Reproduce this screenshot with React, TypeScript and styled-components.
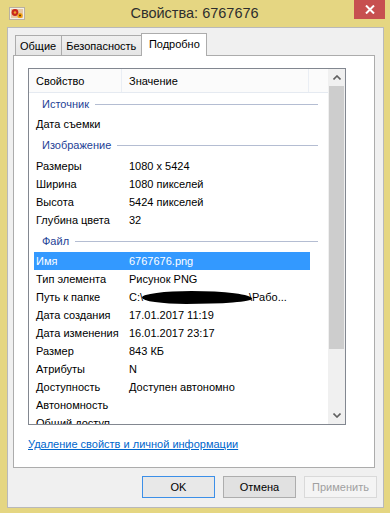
import React from 'react';
import styled, { createGlobalStyle } from 'styled-components';

type Row =
  | { kind: 'group'; title: string; height: number }
  | { kind: 'item'; label: string; value?: React.ReactNode; selected?: boolean };

const rows: Row[] = [
  { kind: 'group', title: 'Источник', height: 22 },
  { kind: 'item', label: 'Дата съемки' },
  { kind: 'group', title: 'Изображение', height: 24 },
  { kind: 'item', label: 'Размеры', value: '1080 x 5424' },
  { kind: 'item', label: 'Ширина', value: '1080 пикселей' },
  { kind: 'item', label: 'Высота', value: '5424 пикселей' },
  { kind: 'item', label: 'Глубина цвета', value: '32' },
  { kind: 'group', title: 'Файл', height: 23 },
  { kind: 'item', label: 'Имя', value: '6767676.png', selected: true },
  { kind: 'item', label: 'Тип элемента', value: 'Рисунок PNG' },
  { kind: 'item', label: 'Путь к папке', value: 'path' },
  { kind: 'item', label: 'Дата создания', value: '17.01.2017 11:19' },
  { kind: 'item', label: 'Дата изменения', value: '16.01.2017 23:17' },
  { kind: 'item', label: 'Размер', value: '843 КБ' },
  { kind: 'item', label: 'Атрибуты', value: 'N' },
  { kind: 'item', label: 'Доступность', value: 'Доступен автономно' },
  { kind: 'item', label: 'Автономность' },
  { kind: 'item', label: 'Общий доступ' },
];

const tabs = ['Общие', 'Безопасность', 'Подробно'];

const AppIcon = () => (
  <svg width="16" height="13" viewBox="0 0 16 13">
    <rect x="0.5" y="0.5" width="15" height="12" fill="#f4f0e6" stroke="#b8b0a0" />
    <rect x="2" y="2" width="12" height="9" fill="#e8c8a0" />
    <circle cx="6" cy="5.5" r="3.4" fill="#c8281c" />
    <circle cx="6" cy="5.5" r="1.3" fill="#f0a030" />
    <circle cx="11" cy="8.5" r="2.6" fill="#f2a010" />
    <circle cx="11" cy="8.5" r="1" fill="#603010" />
  </svg>
);

const Chevron = ({ down }: { down?: boolean }) => (
  <svg width="8" height="5" viewBox="0 0 8 5" style={{ transform: down ? 'rotate(180deg)' : undefined }}>
    <path d="M0.5 4.5 L4 1 L7.5 4.5" fill="none" stroke="#606060" strokeWidth="1.6" />
  </svg>
);

const App = () => {
  return (
    <>
      <GlobalStyle />
      <S.Window>
        <S.TitleBar>
          <S.IconBox>
            <AppIcon />
          </S.IconBox>
          <S.Title>Свойства: 6767676</S.Title>
          <S.CloseButton>
            <svg width="10" height="9" viewBox="0 0 10 9">
              <path d="M1 0.5 L9 8.5 M9 0.5 L1 8.5" stroke="#fff" strokeWidth="2" />
            </svg>
          </S.CloseButton>
        </S.TitleBar>
        <S.Client>
          <S.TabsRow>
            {tabs.map((tab, i) => (
              <S.Tab key={tab} $active={i === 2}>
                {tab}
              </S.Tab>
            ))}
          </S.TabsRow>
          <S.Panel>
            <S.ListBox>
              <S.ListContent>
                <S.HeaderRow>
                  <S.HeaderCell $width={93}>Свойство</S.HeaderCell>
                  <S.HeaderCell $width={187}>Значение</S.HeaderCell>
                  <S.HeaderCell $width={18} />
                </S.HeaderRow>
                {rows.map((row, i) =>
                  row.kind === 'group' ? (
                    <S.GroupRow key={i} $height={row.height}>
                      <S.GroupTitle>{row.title}</S.GroupTitle>
                      <S.GroupLine />
                    </S.GroupRow>
                  ) : (
                    <S.ItemRow key={i} $selected={row.selected}>
                      <S.Label>{row.label}</S.Label>
                      <S.Value>
                        {row.value === 'path' ? (
                          <>
                            C:\
                            <S.Redaction />
                            \Рабо...
                          </>
                        ) : (
                          row.value
                        )}
                      </S.Value>
                    </S.ItemRow>
                  ),
                )}
              </S.ListContent>
              <S.ScrollBar>
                <S.ScrollArrow>
                  <Chevron />
                </S.ScrollArrow>
                <S.ScrollThumb />
                <S.ScrollTrack />
                <S.ScrollArrow>
                  <Chevron down />
                </S.ScrollArrow>
              </S.ScrollBar>
            </S.ListBox>
            <S.Link>Удаление свойств и личной информации</S.Link>
          </S.Panel>
          <S.ButtonRow>
            <S.DialogButton $variant="default">OK</S.DialogButton>
            <S.DialogButton>Отмена</S.DialogButton>
            <S.DialogButton $variant="disabled">Применить</S.DialogButton>
          </S.ButtonRow>
        </S.Client>
      </S.Window>
    </>
  );
};

export default App;

const GlobalStyle = createGlobalStyle`
  * {
    box-sizing: border-box;
  }

  body {
    margin: 0;
    font-family: "Liberation Sans", Arial, sans-serif;
    font-size: 11px;
    color: #000;
  }
`;

const S = {
  Window: styled.div`
    display: flex;
    flex-direction: column;

    width: 390px;
    height: 513px;
    padding: 0 6px 5px 7px;

    background: #e5d682;
  `,

  TitleBar: styled.div`
    display: flex;
    align-items: flex-start;

    height: 27px;
  `,

  IconBox: styled.div`
    display: flex;

    width: 16px;
    margin: 7px 0 0 2px;
  `,

  Title: styled.div`
    flex: 1;

    padding: 5px 0 0 10px;

    font-size: 14.5px;
    color: #2e2e2e;
    text-align: center;
  `,

  CloseButton: styled.div`
    display: flex;
    justify-content: center;
    align-items: center;

    width: 31px;
    height: 19px;
    margin-right: -1px;

    background: #c75050;
  `,

  Client: styled.div`
    display: flex;
    flex-direction: column;

    height: 481px;

    border: 1px solid #b9b9b9;
    background: #f0f0f0;
  `,

  TabsRow: styled.div`
    position: relative;
    z-index: 1;

    display: flex;
    align-items: flex-end;

    height: 28px;
    padding-left: 7px;
    margin-bottom: -1px;
  `,

  Tab: styled.div<{ $active?: boolean }>`
    display: flex;
    align-items: center;
    justify-content: center;

    height: ${(p) => (p.$active ? '23px' : '21px')};
    padding: ${(p) => (p.$active ? '0 0 2px 0' : '0')};
    width: ${(p) => (p.$active ? '66px' : 'auto')};
    padding-left: ${(p) => (p.$active ? '0' : '4px')};
    padding-right: ${(p) => (p.$active ? '0' : '5px')};
    margin-left: -1px;

    border: 1px solid #acacac;
    border-bottom: ${(p) => (p.$active ? 'none' : '1px solid #acacac')};
    background: ${(p) => (p.$active ? '#ffffff' : 'linear-gradient(#f0f0f0, #e5e5e5)')};

    white-space: nowrap;

    &:first-child {
      margin-left: 0;
    }
  `,

  Panel: styled.div`
    display: flex;
    flex-direction: column;

    height: 413px;
    margin: 0 8px 0 5px;
    padding: 12px 0 0 14px;

    border: 1px solid #acacac;
    background: #ffffff;
  `,

  ListBox: styled.div`
    display: flex;

    width: 318px;
    height: 357px;

    border: 1px solid #828790;
    background: #ffffff;
    overflow: hidden;
  `,

  ListContent: styled.div`
    flex: 1;

    overflow: hidden;
  `,

  HeaderRow: styled.div`
    display: flex;

    height: 24px;

    border-bottom: 1px solid #e5eaf1;
    background: #fbfbfb;
  `,

  HeaderCell: styled.div<{ $width: number }>`
    display: flex;
    align-items: center;

    width: ${(p) => p.$width}px;
    padding-left: 7px;

    border-right: 1px solid #eaeef4;

    &:last-child {
      border-right: none;
    }
  `,

  GroupRow: styled.div<{ $height: number }>`
    display: flex;
    align-items: center;
    gap: 6px;

    height: ${(p) => p.$height}px;
    padding: 0 10px 0 13px;
  `,

  GroupTitle: styled.span`
    color: #1e3f96;
  `,

  GroupLine: styled.div`
    flex: 1;

    height: 1px;
    margin-top: 1px;

    background: #b4bdd2;
  `,

  ItemRow: styled.div<{ $selected?: boolean }>`
    display: flex;
    align-items: center;

    width: 276px;
    height: 18px;
    margin-left: 5px;
    padding-left: 2px;

    background: ${(p) => (p.$selected ? '#3399ff' : 'transparent')};
    color: ${(p) => (p.$selected ? '#ffffff' : '#000000')};
    white-space: nowrap;
  `,

  Label: styled.span`
    width: 93px;
  `,

  Value: styled.span`
    display: flex;
    align-items: center;
  `,

  Redaction: styled.span`
    display: inline-block;

    width: 110px;
    height: 13px;
    margin: 1px -3px 0 -1px;

    border-radius: 45% 55% 60% 40% / 50% 60% 40% 50%;
    background: #000000;
  `,

  ScrollBar: styled.div`
    display: flex;
    flex-direction: column;

    width: 17px;

    background: #f0f0f0;
  `,

  ScrollArrow: styled.div`
    display: flex;
    justify-content: center;
    align-items: center;

    height: 17px;
  `,

  ScrollThumb: styled.div`
    height: 263px;
    margin: 0 1px;

    background: #cdcdcd;
  `,

  ScrollTrack: styled.div`
    flex: 1;
  `,

  Link: styled.span`
    margin-top: 12px;

    color: #0066cc;
    text-decoration: underline;
    line-height: 15px;
  `,

  ButtonRow: styled.div`
    display: flex;
    justify-content: flex-end;
    gap: 8px;

    padding: 8px 6px 0 0;
  `,

  DialogButton: styled.button<{ $variant?: 'default' | 'disabled' }>`
    width: 73px;
    height: 22px;
    padding: 0;

    border: 1px solid
      ${(p) => (p.$variant === 'default' ? '#3c8fe8' : p.$variant === 'disabled' ? '#d9d9d9' : '#adadad')};
    background: ${(p) =>
      p.$variant === 'disabled' ? '#f4f4f4' : p.$variant === 'default' ? '#e8e8e8' : '#e1e1e1'};
    color: ${(p) => (p.$variant === 'disabled' ? '#a0a0a0' : '#000000')};

    font-family: "Liberation Sans", Arial, sans-serif;
    font-size: 11px;
  `,
};
